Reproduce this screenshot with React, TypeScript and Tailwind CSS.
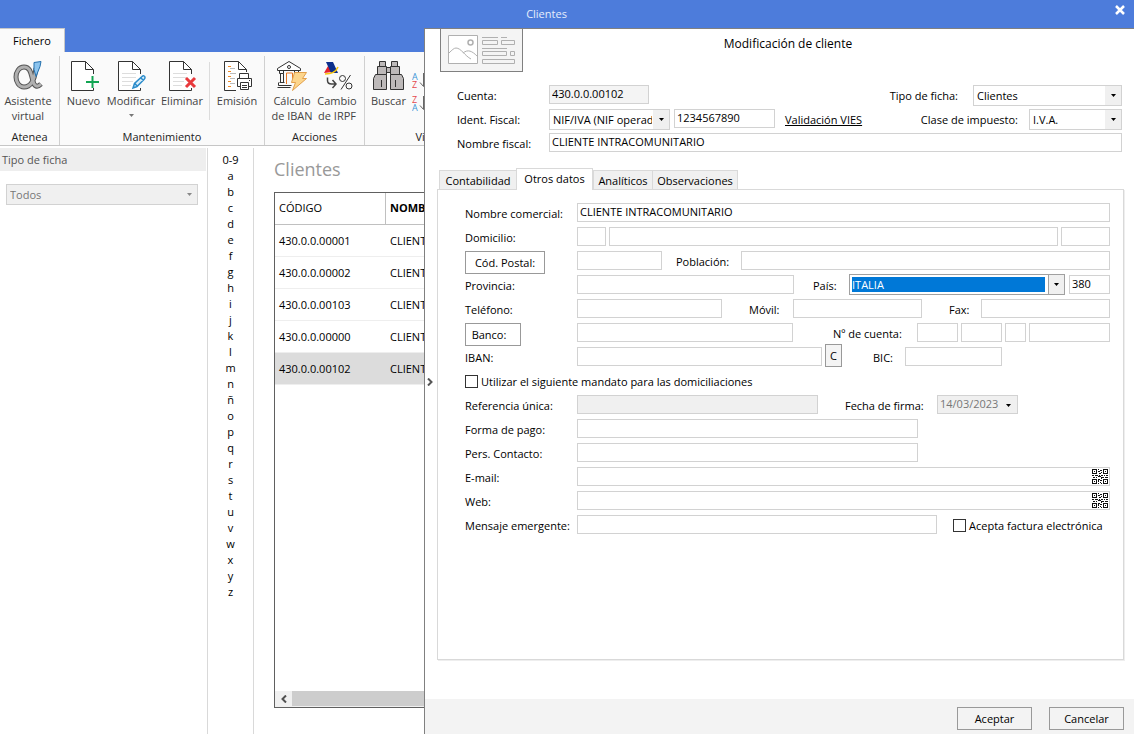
import type { ComponentProps, ReactNode } from "react";
import { clsx } from "clsx";
import { twMerge } from "tailwind-merge";

const customers = [
  { code: "430.0.0.00001", name: "CLIENTE" },
  { code: "430.0.0.00002", name: "CLIENTE" },
  { code: "430.0.0.00103", name: "CLIENTE" },
  { code: "430.0.0.00000", name: "CLIENTE" },
  { code: "430.0.0.00102", name: "CLIENTE", selected: true },
];

const letters = ["0-9", ..."abcdefghijklmnñopqrstuvwxyz"];

/* ---------- icons ---------- */

function Icon({ children }: { children: ReactNode }) {
  return (
    <svg width="32" height="32" viewBox="0 0 32 32" fill="none" stroke="#333" aria-hidden="true">
      {children}
    </svg>
  );
}

function Page({ lines }: { lines?: boolean }) {
  return (
    <>
      <path fill="#fff" stroke="none" d="M4 2h13l8 8v20H4z" />
      <path d="M25.5 14V9.5L17.5 1.5H3.5v29h22V28M17.5 1.5v8h8" />
      {lines && <path stroke="#ddd" d="M7 13.5h14M7 17.5h14M7 21.5h11M7 25.5h9" />}
    </>
  );
}

function AlphaIcon() {
  const loop = "M24 8c-1 9-4 19-12 19C7 27 4 22 4 17S7 7 12 7c7 0 7 8 9 14 1 5 4 7 8 3";
  return (
    <Icon>
      <path stroke="#555" strokeWidth="5" d={loop} />
      <path stroke="#b0b0b0" strokeWidth="3" d={loop} />
      <path fill="#8cc4ee" stroke="#2470ad" d="M22 2.500l7-1-1 5-4 10-2-7z" />
    </Icon>
  );
}

function NewIcon() {
  return (
    <Icon>
      <Page />
      <path stroke="#12a553" strokeWidth="2" d="M18 22h13M24.500 16v12" />
    </Icon>
  );
}

function EditIcon() {
  return (
    <Icon>
      <Page lines />
      <path stroke="#2b8ccb" strokeWidth="1.500" fill="#d9edfa" d="M18 28l1.500-4.500L27 16.500c1-1 3-1 3 1 0 1-.5 1.500-1 2L22 26.500zM26 18l2.500 2.500M20 23.500l2 2.500" />
    </Icon>
  );
}

function DeleteIcon() {
  return (
    <Icon>
      <Page lines />
      <path stroke="#e8393c" strokeWidth="3" d="M20 18l9 9M29 18l-9 9" />
    </Icon>
  );
}

function PrintIcon() {
  return (
    <Icon>
      <path fill="#fff" d="M25.5 12V9.500L17.500 1.500H3.500v29H15M17.500 1.500v8h8" />
      <path stroke="#f08a24" d="M7 6.500h3M7 11.500h3M7 16.500h3M7 21.500h3M7 26.500h3" />
      <path stroke="#bbb" d="M9 8.500h5M9 13.500h6M9 18.500h5M9 23.500h5" />
      <path fill="#fff" d="M18.500 18.500v-5h9v5M16.500 18.500h14v8h-14z" />
      <path fill="#fff" d="M19.500 22.500h8v7h-8zM21 25.500h5M21 27.500h5M28 20.500h1" />
    </Icon>
  );
}

function BankIcon() {
  return (
    <Icon>
      <path fill="#fff" d="M1.500 8.500L13 1.500l11.500 7v2h-23z" />
      <circle cx="13" cy="7" r="1.500" />
      <path d="M3.500 10.500v3h4v-3M4.500 13.500v9M7.500 13.500v9M18.500 10.500v3h4v-3M3.500 22.500h5M2.500 22.500v3h13M1.500 27.500h13" />
      <path stroke="#e87722" d="M10.500 24v-11h6v6" />
      <path fill="#fcd58c" stroke="#e3a04b" d="M18.500 12.500h12l-4 6h4L16.500 30.500l3-8h-4z" />
    </Icon>
  );
}

function TaxIcon() {
  return (
    <Icon>
      <path fill="#e3202c" stroke="none" d="M3 13l4-7 4 6z" />
      <path fill="#0d2f8c" stroke="none" d="M5 2h7l5 11h-7z" />
      <path stroke="#f8c60c" strokeWidth="1.500" d="M4 14c6 0 11-2 13-7" />
      <path strokeWidth="1.500" stroke="#444" d="M6.500 17.500v3c0 2 1 3.500 4 3.500h4M11.500 20l3.500 4-3.500 4" />
      <circle cx="21.500" cy="18.500" r="3" />
      <circle cx="28" cy="26" r="3" />
      <path d="M29.500 15L20 29.500" />
    </Icon>
  );
}

function BinocularsIcon() {
  return (
    <Icon>
      <g fill="#bdb9b9">
        <path d="M6.500 1.500h6v5h-6zM18.500 1.500h6v5h-6zM13.500 7.500h4v5h-4z" />
        <path d="M4.500 6.500h9v8h-9zM17.500 6.500h9v8h-9z" />
        <path d="M2.500 14.500h11v15H.5v-11zM17.500 14.500h11l2 4v11h-13z" />
      </g>
      <path d="M8.500 20v7M22.500 20v7" />
    </Icon>
  );
}

function SortIcon({ first, second, up }: { first: string; second: string; up?: boolean }) {
  const blue = "#3b94d6";
  const red = "#e5484d";
  return (
    <svg width="16" height="17" viewBox="0 0 16 17" aria-hidden="true">
      <g fontFamily="Open Sans, sans-serif" fontSize="9">
        <text x="0" y="8" fill={up ? red : blue}>{first}</text>
        <text x="0" y="16" fill={up ? blue : red}>{second}</text>
      </g>
      <path fill="none" stroke="#666" d="M11.500 1v13M8 10.500l3.500 4 3.500-4" />
    </svg>
  );
}

function QrIcon() {
  return (
    <svg width="16" height="15" viewBox="0 0 16 15" fill="none" stroke="#111" shapeRendering="crispEdges" aria-hidden="true">
      <path d="M.5.500h4v4h-4zM11.500.500h4v4h-4zM.5 10.500h4v4h-4zM11.500 10.500h4v4h-4z" />
      <path d="M2 2.500h1M13 2.500h1M2 12.500h1M13 12.500h1M6 .5h1M6 2.500h2M8 1.500h2M7 4.500h2M9 3.500h1M0 6.500h2M3 6.500h3M7 6.500h1M9 6.500h2M12 6.500h1M14 6.500h2M1 8.500h2M4 8.500h1M6 7.500h3M9 8.500h3M13 8.500h3M6 10.500h2M9 9.500h1M6 12.500h1M8 11.500h2M6 14.500h1M8 13.500h1M9 14.500h1M6 11.500h1" />
    </svg>
  );
}

function CardIcon() {
  return (
    <svg width="68" height="30" viewBox="0 0 68 30" fill="none" stroke="#b0b0b0" aria-hidden="true">
      <path fill="#fff" d="M.5.500h29v28H.5z" />
      <circle cx="22.500" cy="7.500" r="2.500" strokeWidth="1.500" />
      <path d="M1 18c3-3 5-5 7-5 5 0 9 8 15 11M15 18c5-4 9-2 14 3" />
      <path d="M34 2.500h16M53 2.500h6M34.500 5.500h15v4h-15zM53.500 5.500h13v4h-13zM34 13.500h25M34.500 16.500h24v4h-24zM62.500 16.500h4v4h-4zM34.500 24.500h32v4h-32z" />
    </svg>
  );
}

function Caret({ className }: { className?: string }) {
  return (
    <svg width="5" height="3" viewBox="0 0 5 3" className={className} fill="currentColor" aria-hidden="true">
      <path d="M0 0h5L2.500 3z" />
    </svg>
  );
}

/* ---------- controls ---------- */

function Label({ className, ...props }: ComponentProps<"label">) {
  return <label className={twMerge("shrink-0 pt-[3px] leading-4 whitespace-nowrap", className)} {...props} />;
}

function Field({ className, ...props }: ComponentProps<"input">) {
  return (
    <input
      type="text"
      className={twMerge("h-[19px] min-w-0 border border-[#d2d2d2] bg-white px-0.5 pb-0.5 leading-4 outline-none", className)}
      {...props}
    />
  );
}

function Combo({ id, value, className, active }: { id: string; value: string; className?: string; active?: boolean }) {
  return (
    <div className={twMerge("relative h-[21px] shrink-0 border border-[#d2d2d2] bg-white", active && "border-[#a0a0a0] p-0.5", className)}>
      <select
        id={id}
        className={clsx(
          "block h-full w-full appearance-none pr-[17px] outline-none",
          active ? "bg-[#0078d7] bg-clip-content text-white" : "pt-0.5 pl-[3px]"
        )}
      >
        <option>{value}</option>
      </select>
      <span
        className={clsx(
          "pointer-events-none absolute inset-y-0 right-0 flex w-4 items-center justify-center bg-[#f0f0f0]",
          active && "border-l border-[#a0a0a0]"
        )}
      >
        <Caret />
      </span>
    </div>
  );
}

function PushButton({ className, ...props }: ComponentProps<"button">) {
  return (
    <button type="button" className={twMerge("h-[23px] shrink-0 border border-[#999] bg-white leading-4", className)} {...props} />
  );
}

function Row({ children }: { children: ReactNode }) {
  return <div className="flex h-6 items-start">{children}</div>;
}

function CheckBox({ id }: { id: string }) {
  return <input id={id} type="checkbox" className="mt-1 mr-[3px] size-[13px] shrink-0 appearance-none border border-[#333] bg-white checked:bg-[#333]" />;
}

/* ---------- ribbon ---------- */

function RibbonButton({ icon, lines, className, menu }: { icon: ReactNode; lines: string[]; className?: string; menu?: boolean }) {
  return (
    <button type="button" className={clsx("flex shrink-0 flex-col items-center text-[#444]", className)}>
      <span className="mb-px">{icon}</span>
      {lines.map((line) => (
        <span key={line} className="leading-[15px] whitespace-nowrap">
          {line}
        </span>
      ))}
      {menu && <Caret className="mt-1.5 text-[#777]" />}
    </button>
  );
}

function RibbonGroup({ title, children, className }: { title: string; children: ReactNode; className?: string }) {
  return (
    <div className={clsx("flex shrink-0 flex-col border-r border-[#d0d0d0]", className)}>
      <div className="flex flex-1 items-start pt-1">{children}</div>
      <div className="text-center leading-4 text-[#222]">{title}</div>
    </div>
  );
}

function Ribbon() {
  return (
    <div>
      <div className="flex h-6 bg-[#4d7cdb]">
        <button type="button" className="w-[65px] border-t border-r border-[#c8c8c8] bg-[#fafafa] pt-px text-black">
          Fichero
        </button>
      </div>
      <div className="flex h-[94px] border-b border-[#c6c6c6] bg-[#fafafa] pt-1">
        <RibbonGroup title="Atenea" className="w-[60px]">
          <RibbonButton icon={<AlphaIcon />} lines={["Asistente", "virtual"]} className="w-14" />
        </RibbonGroup>
        <RibbonGroup title="Mantenimiento" className="w-[205px]">
          <RibbonButton icon={<NewIcon />} lines={["Nuevo"]} className="w-[47px]" />
          <RibbonButton icon={<EditIcon />} lines={["Modificar"]} className="w-12" menu />
          <RibbonButton icon={<DeleteIcon />} lines={["Eliminar"]} className="w-[54px]" />
          <span className="mt-0.5 h-[58px] w-px bg-[#dcdcdc]" />
          <RibbonButton icon={<PrintIcon />} lines={["Emisión"]} className="w-[54px]" />
        </RibbonGroup>
        <RibbonGroup title="Acciones" className="w-[100px]">
          <RibbonButton icon={<BankIcon />} lines={["Cálculo", "de IBAN"]} className="w-[54px]" />
          <RibbonButton icon={<TaxIcon />} lines={["Cambio", "de IRPF"]} className="w-9" />
        </RibbonGroup>
        <RibbonGroup title="Vistas" className="w-[132px]">
          <RibbonButton icon={<BinocularsIcon />} lines={["Buscar"]} className="w-[47px]" />
          <div className="flex flex-col gap-1.5 pt-3">
            <SortIcon first="A" second="Z" />
            <SortIcon first="Z" second="A" up />
          </div>
        </RibbonGroup>
      </div>
    </div>
  );
}

/* ---------- customer list ---------- */

function CustomerList() {
  return (
    <div className="flex flex-1 pt-0.5">
      <aside className="w-52 shrink-0 border-r border-[#d9d9d9]">
        <label htmlFor="filter" className="mr-px block h-[23px] bg-[#eee] px-0.5 leading-[23px] text-[#555]">
          Tipo de ficha
        </label>
        <div className="relative mx-1.5 mt-[13px] mr-[9px] h-[21px]">
          <select id="filter" disabled className="block h-full w-full appearance-none border border-[#d2d2d2] bg-[#f0f0f0] pt-0.5 pl-[3px] text-[#777] opacity-100">
            <option>Todos</option>
          </select>
          <Caret className="absolute top-[9px] right-1.5 text-[#888]" />
        </div>
      </aside>
      <nav className="flex w-[46px] shrink-0 flex-col items-center border-r border-[#d9d9d9] pt-1">
        {letters.map((letter) => (
          <button key={letter} type="button" className="h-4 leading-4">
            {letter}
          </button>
        ))}
      </nav>
      <section className="flex w-[480px] shrink-0 flex-col pb-[26px] pl-5">
        <h1 className="h-11 pt-2 text-lg leading-[26px] text-[#999]">Clientes</h1>
        <div className="flex flex-1 flex-col border border-[#606060]">
          <table className="w-full table-fixed border-separate border-spacing-0 text-left">
            <thead>
              <tr className="h-8">
                <th className="w-[111px] border-r border-b border-[#c0c0c0] px-1 font-normal">CÓDIGO</th>
                <th className="border-b border-[#c0c0c0] px-1 font-bold">NOMBRE</th>
              </tr>
            </thead>
            <tbody>
              {customers.map((c) => (
                <tr key={c.code} className={clsx("h-8", c.selected && "bg-[#dcdcdc]")}>
                  <td className="border-b border-[#eee] px-1 pt-0.5">{c.code}</td>
                  <td className="border-b border-[#eee] px-1 pt-0.5">{c.name}</td>
                </tr>
              ))}
            </tbody>
          </table>
          <div className="mt-auto flex h-4 bg-[#f0f0f0]">
            <button type="button" aria-label="Desplazar a la izquierda" className="flex w-[17px] items-center justify-center">
              <svg width="6" height="8" viewBox="0 0 6 8" fill="none" stroke="#505050" strokeWidth="2">
                <path d="M5 .5L1.500 4 5 7.500" />
              </svg>
            </button>
            <div className="mb-px flex-1 bg-[#cdcdcd]" />
          </div>
        </div>
      </section>
    </div>
  );
}

/* ---------- customer dialog ---------- */

function DialogHeader() {
  return (
    <>
      <div className="flex pr-[81px] pl-[15px]">
        <div className="flex h-[43px] w-[83px] shrink-0 justify-center border border-t-0 border-[#808080] bg-[#f4f4f4] pt-1.5">
          <CardIcon />
        </div>
        <h2 className="flex-1 pt-[7px] text-center text-xs leading-4">Modificación de cliente</h2>
      </div>
      <div className="mt-[13px] pr-3 pl-8">
        <Row>
          <Label htmlFor="account" className="w-[92px]">Cuenta:</Label>
          <Field id="account" defaultValue="430.0.0.00102" readOnly className="w-[100px] bg-[#f4f4f4]" />
          <Label htmlFor="kind" className="ml-auto pr-[15px]">Tipo de ficha:</Label>
          <Combo id="kind" value="Clientes" className="w-[149px]" />
        </Row>
        <Row>
          <Label htmlFor="idType" className="w-[92px]">Ident. Fiscal:</Label>
          <Combo id="idType" value="NIF/IVA (NIF operador intracomunitario)" className="mr-1 w-[121px]" />
          <Field aria-label="NIF" defaultValue="1234567890" className="w-[101px]" />
          <a href="#vies" className="ml-2.5 pt-[3px] leading-4 underline">Validación VIES</a>
          <Label htmlFor="tax" className="ml-auto pr-[11px]">Clase de impuesto:</Label>
          <Combo id="tax" value="I.V.A." className="w-[93px]" />
        </Row>
        <Row>
          <Label htmlFor="fiscalName" className="w-[92px]">Nombre fiscal:</Label>
          <Field id="fiscalName" defaultValue="CLIENTE INTRACOMUNITARIO" className="flex-1" />
        </Row>
      </div>
    </>
  );
}

const tabs = [
  { title: "Contabilidad", className: "w-[78px]" },
  { title: "Otros datos", className: "w-[77px]", current: true },
  { title: "Analíticos", className: "w-[60px]" },
  { title: "Observaciones", className: "w-[86px]" },
];

function Tabs() {
  return (
    <div role="tablist" className="mt-[11px] flex items-end pl-3.5">
      {tabs.map((tab) => (
        <button
          key={tab.title}
          type="button"
          role="tab"
          aria-selected={!!tab.current}
          className={clsx(
            "border border-b-0 border-[#d9d9d9] whitespace-nowrap",
            tab.className,
            tab.current ? "relative -mb-px h-[22px] bg-white" : "-mr-px h-[19px] bg-[#f0f0f0] pt-0.5"
          )}
        >
          {tab.title}
        </button>
      ))}
    </div>
  );
}

function QrField({ id }: { id: string }) {
  return (
    <div className="relative flex flex-1">
      <Field id={id} className="flex-1 pr-5" />
      <button type="button" aria-label="Código QR" className="absolute top-0.5 right-0.5">
        <QrIcon />
      </button>
    </div>
  );
}

function OtherData() {
  return (
    <div role="tabpanel" className="mr-2.5 ml-3 flex-1 border border-[#d9d9d9] pt-[13px] pr-[13px] pl-[27px] shadow-[1px_1px_0_#eee]">
      <Row>
        <Label htmlFor="tradeName" className="w-28">Nombre comercial:</Label>
        <Field id="tradeName" defaultValue="CLIENTE INTRACOMUNITARIO" className="flex-1" />
      </Row>
      <Row>
        <Label htmlFor="street" className="w-28">Domicilio:</Label>
        <Field aria-label="Tipo de vía" className="mr-[3px] w-[29px]" />
        <Field id="street" className="mr-[3px] flex-1" />
        <Field aria-label="Número" className="w-[49px]" />
      </Row>
      <Row>
        <PushButton className="mr-8 w-20">Cód. Postal:</PushButton>
        <Field aria-label="Código postal" className="w-[85px]" />
        <Label htmlFor="town" className="w-[79px] pl-3.5">Población:</Label>
        <Field id="town" className="flex-1" />
      </Row>
      <Row>
        <Label htmlFor="province" className="w-28">Provincia:</Label>
        <Field id="province" className="flex-1" />
        <Label htmlFor="country" className="w-[55px] pl-[19px]">País:</Label>
        <Combo id="country" value="ITALIA" active className="-mt-px w-[216px]" />
        <Field aria-label="Código de país" defaultValue="380" className="ml-1 w-[41px]" />
      </Row>
      <Row>
        <Label htmlFor="phone" className="w-28">Teléfono:</Label>
        <Field id="phone" className="flex-1" />
        <Label htmlFor="mobile" className="w-[71px] pl-[27px]">Móvil:</Label>
        <Field id="mobile" className="w-[129px]" />
        <Label htmlFor="fax" className="w-[59px] pl-[27px]">Fax:</Label>
        <Field id="fax" className="w-[129px]" />
      </Row>
      <Row>
        <PushButton className="mr-14 w-14 pr-2">Banco:</PushButton>
        <Field aria-label="Banco" className="flex-1" />
        <Label htmlFor="bankCode" className="w-[124px] pl-10">Nº de cuenta:</Label>
        <div className="flex gap-[3px]">
          <Field id="bankCode" className="w-[41px]" />
          <Field aria-label="Oficina" className="w-[41px]" />
          <Field aria-label="Dígito de control" className="w-[21px]" />
          <Field aria-label="Número de cuenta" className="w-[81px]" />
        </div>
      </Row>
      <Row>
        <Label htmlFor="iban" className="w-28">IBAN:</Label>
        <Field id="iban" className="mr-[3px] w-[245px]" />
        <PushButton className="-mt-[3px] w-[17px] bg-[#f4f4f4]">C</PushButton>
        <Label htmlFor="bic" className="w-[63px] pl-[31px]">BIC:</Label>
        <Field id="bic" className="w-[97px]" />
      </Row>
      <Row>
        <CheckBox id="mandate" />
        <Label htmlFor="mandate">Utilizar el siguiente mandato para las domiciliaciones</Label>
      </Row>
      <Row>
        <Label htmlFor="reference" className="w-28">Referencia única:</Label>
        <Field id="reference" disabled className="w-[241px] bg-[#f0f0f0]" />
        <Label htmlFor="signed" className="w-[119px] pl-[27px]">Fecha de firma:</Label>
        <div className="relative w-[81px]">
          <Field id="signed" disabled defaultValue="14/03/2023" className="block w-full bg-[#f0f0f0] text-[#777]" />
          <Caret className="absolute top-[9px] right-[7px]" />
        </div>
      </Row>
      <Row>
        <Label htmlFor="payment" className="w-28">Forma de pago:</Label>
        <Field id="payment" className="w-[341px]" />
      </Row>
      <Row>
        <Label htmlFor="contact" className="w-28">Pers. Contacto:</Label>
        <Field id="contact" className="w-[341px]" />
      </Row>
      <Row>
        <Label htmlFor="email" className="w-28">E-mail:</Label>
        <QrField id="email" />
      </Row>
      <Row>
        <Label htmlFor="web" className="w-28">Web:</Label>
        <QrField id="web" />
      </Row>
      <Row>
        <Label htmlFor="message" className="w-28">Mensaje emergente:</Label>
        <Field id="message" className="mr-4 w-[360px]" />
        <CheckBox id="einvoice" />
        <Label htmlFor="einvoice">Acepta factura electrónica</Label>
      </Row>
    </div>
  );
}

function CustomerDialog() {
  return (
    <div className="flex min-w-0 flex-1 border-t border-l border-[#808080] bg-white">
      <form className="relative flex min-w-0 flex-1 flex-col">
        <DialogHeader />
        <Tabs />
        <OtherData />
        <footer className="mt-[39px] flex h-[35px] justify-end gap-[17px] bg-[#f3f3f3] pt-2 pr-2.5">
          <PushButton className="w-[75px] bg-[#f3f3f3]">Aceptar</PushButton>
          <PushButton className="w-[75px] bg-[#f3f3f3]">Cancelar</PushButton>
        </footer>
        <button type="button" aria-label="Contraer panel" className="absolute inset-y-0 left-0.5 flex items-center">
          <svg width="6" height="8" viewBox="0 0 6 8" fill="none" stroke="#555" strokeWidth="2">
            <path d="M1 .5L4.500 4 1 7.500" />
          </svg>
        </button>
      </form>
    </div>
  );
}

export default function App() {
  return (
    <div className="flex min-h-screen flex-col bg-white font-['Open_Sans','Noto_Sans',sans-serif] text-[11px] text-black">
      <header className="flex h-7 shrink-0 bg-[#4d7cdb]">
        <div className="flex-1 text-center leading-7 text-[#e6eefc]">Clientes</div>
        <button type="button" aria-label="Cerrar" className="ml-[13px] flex h-5 w-7 items-center justify-center">
          <svg width="10" height="10" viewBox="0 0 10 10" stroke="#fff" strokeWidth="2.500">
            <path d="M1 1l8 8M9 1L1 9" />
          </svg>
        </button>
      </header>
      <div className="flex flex-1">
        <div className="flex w-[424px] shrink-0 flex-col overflow-hidden">
          <Ribbon />
          <CustomerList />
        </div>
        <CustomerDialog />
      </div>
    </div>
  );
}
